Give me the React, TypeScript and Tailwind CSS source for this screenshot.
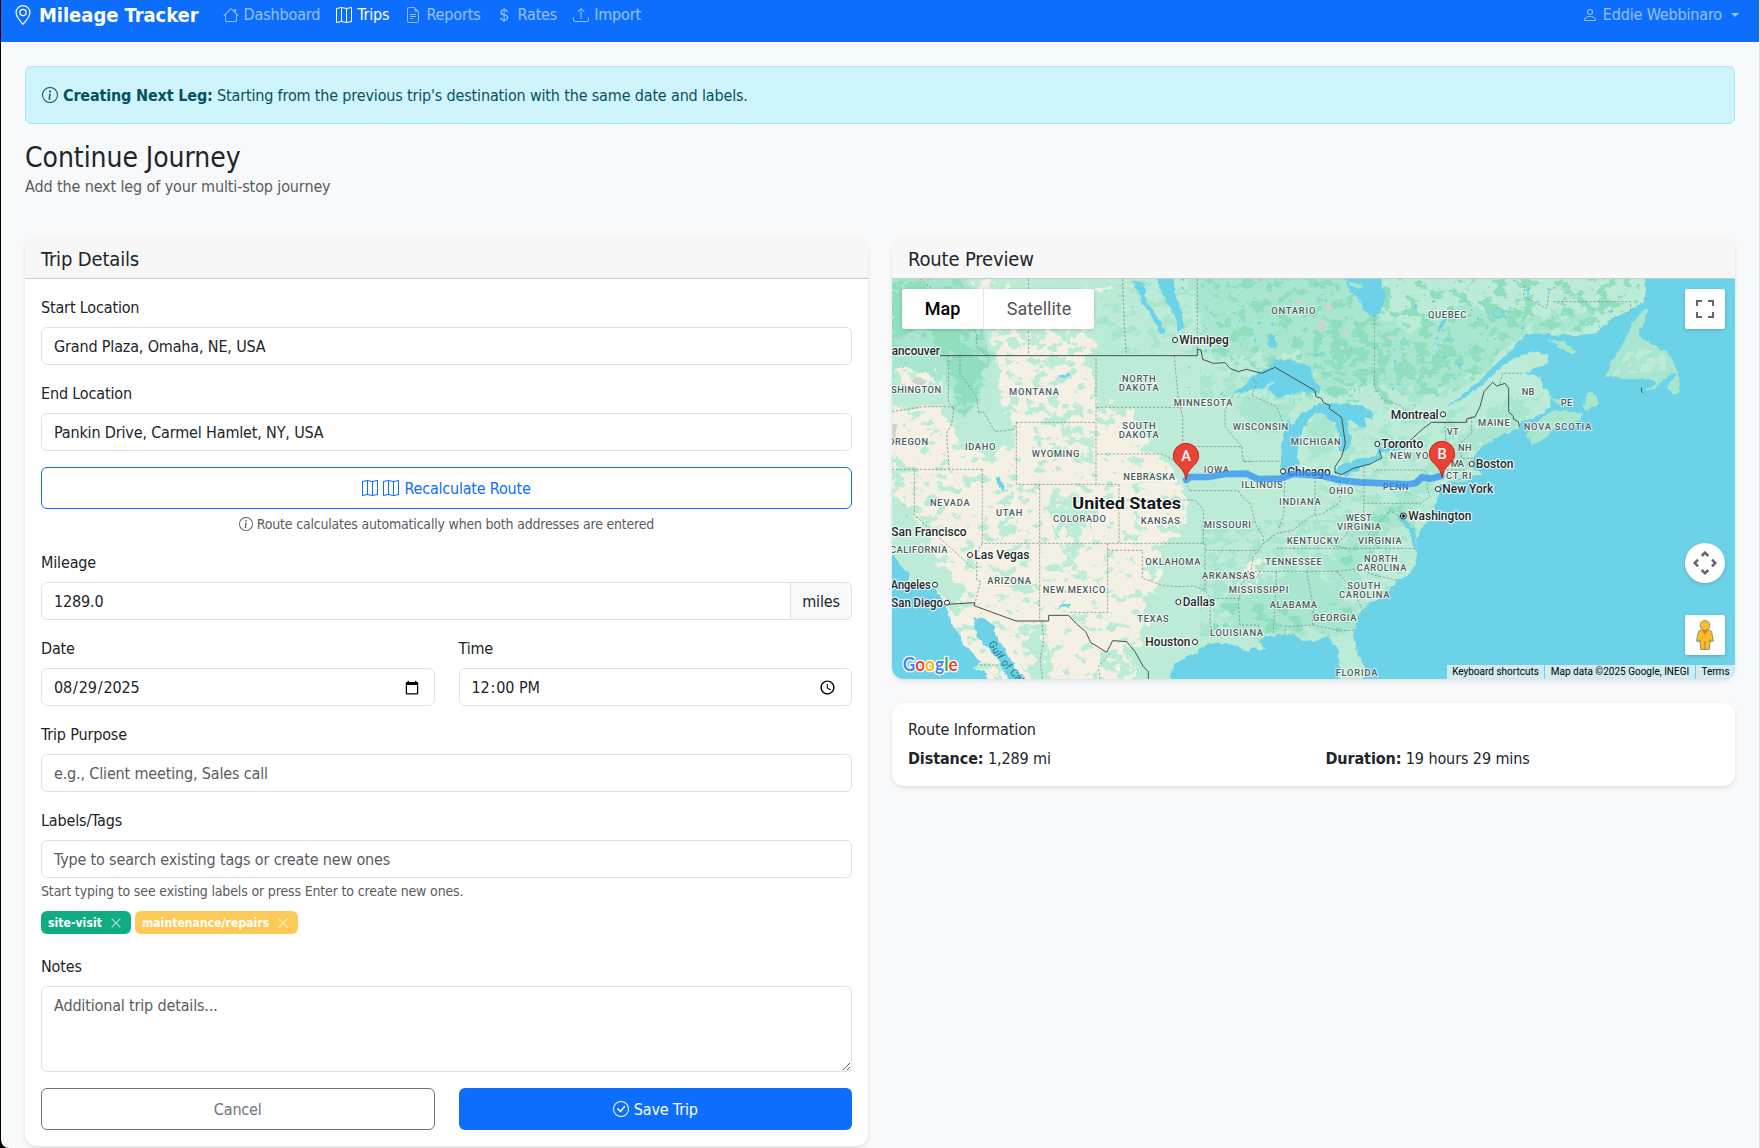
import type { ReactNode } from "react";
import {
  BsGeoAlt,
  BsHouse,
  BsMap,
  BsFileEarmarkText,
  BsCurrencyDollar,
  BsUpload,
  BsPerson,
  BsInfoCircle,
  BsCheckCircle,
} from "react-icons/bs";

const inputClass =
  "block w-full h-[38px] rounded-md border border-[#dee2e6] bg-white px-3 text-[#212529] placeholder:text-[#595c5f] placeholder:opacity-100 outline-none";
const pickerClass =
  "block w-full h-[38px] rounded-md border border-[#dee2e6] bg-white pl-[11px] pr-3 pt-px text-[#212529] outline-none";

function Field({ label, children }: { label: string; children: ReactNode }) {
  return (
    <div className="min-w-0">
      <label className="mb-[7px] block pt-px leading-6">{label}</label>
      {children}
    </div>
  );
}

function NavLink({ icon, text, active }: { icon: ReactNode; text: string; active?: boolean }) {
  return (
    <a className={active ? "flex items-center gap-[5px] px-2 text-white" : "flex items-center gap-[5px] px-2 text-white/55"}>
      {icon}
      <span>{text}</span>
    </a>
  );
}

function Badge({ text, className }: { text: string; className: string }) {
  return (
    <span className={"flex h-[23px] items-center rounded-md pl-[7px] pr-[10px] text-xs font-bold tracking-[0.08px] text-white " + className}>
      <span className="pt-px">{text}</span>
      <svg className="ml-[9px] h-[10px] w-[10px] opacity-60" viewBox="0 0 10 10" stroke="#fff" strokeWidth="1.1" fill="none">
        <path d="M.5.5l9 9M9.5.5l-9 9" />
      </svg>
    </span>
  );
}

type Label = [text: string, x: number, baseline: number, width: number];

const STATES: Label[] = [
  ["MONTANA", 387, 524, 150],
  ["NORTH", 726, 485, 101],
  ["DAKOTA", 716, 512, 120],
  ["SOUTH", 727, 627, 100],
  ["DAKOTA", 716, 654, 120],
  ["MINNESOTA", 881, 558, 176],
  ["WISCONSIN", 1058, 630, 166],
  ["SHINGTON", 33, 518, 150],
  ["OREGON", 24, 674, 120],
  ["IDAHO", 255, 689, 91],
  ["WYOMING", 455, 711, 143],
  ["ONTARIO", 1174, 282, 132],
  ["QUEBEC", 1644, 294, 115],
  ["MICHIGAN", 1232, 674, 150],
  ["NB", 1925, 524, 38],
  ["PE", 2042, 557, 35],
  ["MAINE", 1794, 617, 95],
  ["NOVA SCOTIA", 1931, 631, 203],
  ["VT", 1700, 646, 36],
  ["NH", 1734, 694, 41],
  ["NEW YO", 1530, 716, 115],
  ["NEBRASKA", 730, 780, 155],
  ["IOWA", 971, 758, 76],
  ["ILLINOIS", 1084, 803, 124],
  ["INDIANA", 1197, 855, 125],
  ["OHIO", 1347, 821, 73],
  ["PENN", 1508, 810, 78],
  ["MA", 1712, 741, 40],
  ["CT RI", 1698, 777, 76],
  ["NEVADA", 150, 857, 119],
  ["UTAH", 348, 888, 79],
  ["COLORADO", 519, 906, 159],
  ["KANSAS", 782, 913, 118],
  ["MISSOURI", 971, 923, 142],
  ["WEST", 1397, 903, 78],
  ["VIRGINIA", 1371, 930, 132],
  ["KENTUCKY", 1220, 972, 157],
  ["VIRGINIA", 1434, 972, 131],
  ["CALIFORNIA", 30, 1000, 172],
  ["OKLAHOMA", 796, 1034, 165],
  ["TENNESSEE", 1156, 1034, 169],
  ["NORTH", 1452, 1025, 101],
  ["CAROLINA", 1430, 1052, 149],
  ["ARIZONA", 322, 1092, 131],
  ["ARKANSAS", 966, 1076, 158],
  ["NEW MEXICO", 488, 1118, 188],
  ["MISSISSIPPI", 1046, 1119, 179],
  ["SOUTH", 1402, 1107, 99],
  ["CAROLINA", 1377, 1135, 151],
  ["ALABAMA", 1169, 1164, 142],
  ["GEORGIA", 1299, 1202, 130],
  ["TEXAS", 772, 1206, 94],
  ["LOUISIANA", 990, 1249, 159],
  ["FLORIDA", 1367, 1367, 125],
];

const CITIES: Label[] = [
  ["ancouver", 35, 404, 145],
  ["Winnipeg", 898, 373, 148],
  ["Montreal", 1532, 597, 144],
  ["Toronto", 1504, 685, 126],
  ["Chicago", 1222, 768, 130],
  ["Boston", 1787, 743, 113],
  ["New York", 1687, 819, 153],
  ["Washington", 1585, 900, 189],
  ["San Francisco", 34, 949, 226],
  ["Las Vegas", 283, 1017, 165],
  ["Angeles", 32, 1106, 120],
  ["San Diego", 34, 1160, 155],
  ["Dallas", 908, 1158, 97],
  ["Houston", 796, 1278, 135],
];

const CITY_DOTS: [number, number][] = [
  [885, 360], [1689, 583], [1492, 672], [1209, 754], [1775, 732], [1674, 807],
  [270, 1005], [165, 1094], [201, 1148], [895, 1146], [945, 1266],
];

function Pin({ x, y, letter }: { x: number; y: number; letter: string }) {
  return (
    <g transform={`translate(${x} ${y})`}>
      <path
        d="M0 0C-3-16-8-26-19-37-31-49-38-56-38-70a38 38 0 0 1 76 0C38-56 31-49 19-37 8-26 3-16 0 0Z"
        fill="#ea4335"
        stroke="#c5221f"
        strokeWidth="3"
      />
      <text x="0" y="-54" textAnchor="middle" fontSize="44" fontWeight="500" fill="#fff">
        {letter}
      </text>
    </g>
  );
}

const OCEAN =
  "M2295 160L2295 240 2250 270 2190 300 2150 340 2090 346 1940 340 1915 365 1900 390 1850 430 1790 490 1740 530 1700 560 1745 540 1800 500 1850 452 1890 420 1930 404 1970 395 2005 405 2005 430 1930 462 1980 470 1990 500 2008 520 2012 560 1975 590 1925 604 1912 625 1870 645 1830 665 1795 690 1780 710 1776 735 1790 755 1810 760 1795 768 1770 770 1715 782 1680 790 1676 820 1660 870 1640 910 1615 940 1607 960 1612 1015 1590 1065 1550 1080 1530 1110 1480 1145 1445 1170 1430 1200 1420 1240 1430 1290 1450 1330 1452 1400 2600 1400 2600 160Z";
const GULF =
  "M870 1400L875 1350 890 1330 915 1315 950 1300 965 1280 1000 1270 1050 1270 1080 1285 1105 1300 1120 1285 1155 1290 1135 1265 1155 1245 1200 1245 1240 1240 1270 1262 1300 1266 1345 1248 1365 1275 1375 1300 1378 1330 1382 1400Z";
const PACIFIC =
  "M20 1000L36 1005 85 1060 85 1080 130 1095 165 1110 190 1140 205 1175 215 1215 245 1250 250 1275 280 1300 300 1330 275 1343 300 1350 320 1360 332 1400 20 1400Z";

function RouteMap() {
  return (
    <svg
      className="block h-[400px] w-full"
      viewBox="36 177 2529 1200"
      preserveAspectRatio="none"
      fontFamily="Roboto, sans-serif"
    >
      <defs>
        <filter id="ragged" x="-5%" y="-5%" width="110%" height="110%" colorInterpolationFilters="sRGB">
          <feTurbulence type="fractalNoise" baseFrequency="0.05" numOctaves="3" seed="4" />
          <feDisplacementMap in="SourceGraphic" scale="17" xChannelSelector="R" yChannelSelector="G" />
        </filter>
        <filter id="torn" x="-10%" y="-10%" width="120%" height="120%" colorInterpolationFilters="sRGB">
          <feTurbulence type="fractalNoise" baseFrequency="0.025" numOctaves="4" seed="9" />
          <feDisplacementMap in="SourceGraphic" scale="90" xChannelSelector="R" yChannelSelector="G" />
        </filter>
        <filter id="sparse" x="0" y="0" width="100%" height="100%" colorInterpolationFilters="sRGB">
          <feTurbulence type="fractalNoise" baseFrequency="0.024 0.034" numOctaves="4" seed="21" />
          <feColorMatrix values="0 0 0 0 0  0 0 0 0 0  0 0 0 0 0  24 0 0 0 -14.8" result="m" />
          <feComposite in="SourceGraphic" in2="m" operator="in" />
        </filter>
        <filter id="speckle" x="0" y="0" width="100%" height="100%" colorInterpolationFilters="sRGB">
          <feTurbulence type="fractalNoise" baseFrequency="0.026 0.034" numOctaves="4" seed="12" />
          <feColorMatrix values="0 0 0 0 0  0 0 0 0 0  0 0 0 0 0  24 0 0 0 -13.6" result="m" />
          <feComposite in="SourceGraphic" in2="m" operator="in" />
        </filter>
        <filter id="dense" x="0" y="0" width="100%" height="100%" colorInterpolationFilters="sRGB">
          <feTurbulence type="fractalNoise" baseFrequency="0.028 0.034" numOctaves="4" seed="33" />
          <feColorMatrix values="0 0 0 0 0  0 0 0 0 0  0 0 0 0 0  24 0 0 0 -12" result="m" />
          <feComposite in="SourceGraphic" in2="m" operator="in" />
        </filter>
        <filter id="lakes" x="0" y="0" width="100%" height="100%" colorInterpolationFilters="sRGB">
          <feTurbulence type="fractalNoise" baseFrequency="0.06" numOctaves="2" seed="7" />
          <feColorMatrix values="0 0 0 0 0  0 0 0 0 0  0 0 0 0 0  30 0 0 0 -22" result="m" />
          <feComposite in="SourceGraphic" in2="m" operator="in" />
        </filter>
      </defs>

      <rect x="36" y="177" width="2529" height="1200" fill="#bcecd8" />

      {/* dry land */}
      <g fill="#f5f0e4" filter="url(#torn)">
        <path d="M330 300L360 300 440 360 520 320 640 350 640 400 620 420 650 480 660 560 760 575 800 690 870 730 930 850 910 900 860 960 850 1060 800 1130 780 1250 740 1300 800 1420 -60 1420 -60 1040 -60 560 190 560 240 680 330 720 400 650 370 560 350 430Z" />
        <path d="M290 185L350 200 440 210 560 280 640 300 600 330 520 290 400 260 320 260Z" />
        <path d="M610 200L720 205 650 225Z" />
        <path d="M40 440L170 450 180 500 60 500Z" />
        <path d="M1090 1080l40-70 18 6-28 110-26 22Z" />
      </g>
      <g fill="#bcecd8">
        <path filter="url(#sparse)" d="M36 177H960V1377H36Z" />
        <path filter="url(#speckle)" d="M280 180H700V480H340ZM420 470L640 560 640 740 480 700ZM36 740H200V1100H36Z" />
        <path filter="url(#dense)" d="M520 800L620 830 640 960 580 1020 540 980 500 880ZM350 850L430 790 410 930 350 970ZM320 1030L480 1100 480 1160 370 1090ZM410 1210L500 1220 520 1377 450 1377ZM660 1280L760 1300 790 1377 660 1377ZM480 560L600 620 640 700 560 640Z" />
        <path filter="url(#torn)" d="M20 800L90 860 130 960 210 1060 260 1110 230 1180 180 1130 80 1080 20 1010ZM36 700L70 760 36 800ZM540 820L580 830 620 900 560 950ZM560 990L580 980 580 1060 560 1050ZM240 560L300 570 330 660 260 690ZM430 1230L480 1230 510 1377 460 1377Z" />
      </g>

      {/* forest tones */}
      <g fill="#a8e6cf">
        <path filter="url(#torn)" d="M20 150H250L300 300 330 420 300 540 240 600 200 480 80 440 20 480Z" />
        <path filter="url(#torn)" d="M920 150H1400L1460 260 1600 340 1780 260 2010 300 2200 240 2100 330 1930 330 1880 400 1760 480 1640 540 1500 500 1330 520 1240 400 1100 420 1000 400 940 260Z" />
        <path filter="url(#torn)" d="M1060 540L1260 540 1200 640 1100 620ZM1290 560L1380 610 1350 700 1280 720ZM1450 900L1560 820 1680 720 1760 640 1860 560 1980 520 1900 620 1760 720 1650 800 1530 960 1400 1080 1330 1060ZM1030 1140L1300 1040 1420 1160 1420 1240 1100 1240Z" />
        <path filter="url(#dense)" d="M960 440H1300V540H960ZM960 900H1500V1250H960Z" />
        <path filter="url(#speckle)" d="M650 177H1000V400H650ZM1300 560H1900V1200H1300Z" />
      </g>
      <g fill="#8fdfbe">
        <path filter="url(#torn)" d="M36 190H110L190 260 250 380 320 420 300 500 240 550 220 430 150 340 60 320 36 420Z" />
        <path filter="url(#dense)" d="M36 177H240L300 300 330 420 300 540 240 600 215 480 190 400 110 340 36 440Z" />
        <path filter="url(#speckle)" d="M960 177H2280V330L1900 340 1800 470 1640 560 1300 540 1000 410Z" />
        <path filter="url(#dense)" d="M1300 330H1500L1520 480 1400 500 1300 440ZM1560 360L1760 380 1740 470 1570 480ZM1820 250L1960 260 1900 350 1830 360ZM2050 230L2230 250 2130 310Z" />
        <path filter="url(#speckle)" d="M1440 900L1600 800 1560 960 1360 1060ZM1000 1150H1420V1240H1000ZM60 830l20 30 4 40-20-20Z" />
      </g>
      <g fill="#cfd3cf">
        <path filter="url(#ragged)" d="M1335 250l26 12-10 16-18-12ZM1315 300l22-2-4 30-14 6ZM1382 330l20 4-6 14ZM92 480l30-8 22 14-30 8ZM1242 245l20-6 10 14-20 4ZM1522 346l24 2-8 12ZM38 610l12 4-4 40-10 0Z" />
      </g>
      <path fill="#6cd2e8" filter="url(#lakes)" d="M900 177H2280V330L1900 340 1700 520 1300 560 900 520Z" />

      {/* seas, gulfs and lakes */}
      <g fill="#6cd2e8" filter="url(#ragged)">
        <path d={OCEAN} />
        <path d={GULF} />
        <path d={PACIFIC} />
        <path d="M280 1190L320 1200 345 1215 345 1245 380 1300 410 1350 455 1400 395 1400 360 1330 320 1280 290 1250 285 1220Z" />
        <path d="M1390 160L1410 210 1440 240 1450 270 1475 288 1500 280 1518 230 1505 200 1505 160Z" />
        <path d="M1055 525L1100 490 1130 460 1170 440 1185 418 1240 420 1290 440 1300 480 1322 500 1318 522 1260 512 1225 525 1195 532 1160 510 1190 480 1150 505 1115 512Z" />
        <path d="M1222 600L1212 640 1205 690 1203 740 1220 772 1250 768 1256 735 1250 690 1262 650 1280 610 1310 578 1350 574 1350 562 1300 560 1265 580 1240 615Z" />
        <path d="M1300 556L1345 548 1400 552 1445 556 1475 575 1478 600 1452 594 1460 625 1436 622 1414 600 1400 604 1412 645 1408 678 1392 697 1376 690 1382 655 1364 612 1338 588 1300 572Z" />
        <path d="M1362 762L1380 735 1420 722 1470 708 1500 702 1504 715 1450 740 1395 768Z" />
        <path d="M1490 688L1530 672 1590 664 1592 685 1530 697 1490 702Z" />
        <path d="M820 160L880 160 885 220 902 270 915 315 893 335 890 300 870 260 850 225Z" />
        <path d="M755 185L790 190 800 245 832 285 855 335 840 342 820 300 790 255 776 215Z" />
        <path d="M345 770l14-4 14 38-10 8ZM1165 345l20 0 4 30-14 10-12-18ZM520 1164l50-14-4 12ZM535 470l32-12 4 6-34 14ZM1668 330l30-44 6 6-24 44ZM1725 425l28 8-14 10ZM1590 930l14 8 6 60-12-26ZM1560 870l14 30 30 30-6 12-40-40Z" />
      </g>
      <circle cx="1855" cy="279" r="15" fill="none" stroke="#6cd2e8" strokeWidth="4" />
      <g fill="#a8e6cf" filter="url(#ragged)">
        <path d="M2290 270L2258 310 2225 380 2195 420 2175 470 2250 475 2320 480 2330 490 2295 515 2320 510 2350 480 2375 460 2390 465 2360 500 2375 525 2395 520 2400 480 2385 440 2370 400 2330 380 2300 362 2272 352 2305 270Z" />
        <path d="M2002 360L2050 365 2090 395 2080 403 2050 390Z" />
        <path d="M1940 640L1955 675 1980 665 2010 640 2050 612 2105 600 2108 580 2050 570 2010 576 1980 600Z" />
        <path d="M2110 560L2130 510 2140 520 2155 548 2120 575ZM2010 530L2050 540 2080 545 2060 558 2030 552Z" />
        <path d="M1402 180l34 8 10 18-24-4Z" />
        <path d="M1700 786L1770 776 1750 790Z" />
      </g>
      <path fill="#bcecd8" filter="url(#dense)" d="M2250 380L2360 400 2370 450 2200 465ZM1960 400L2000 405 1930 440Z" />

      {/* state and province borders */}
      <g fill="none" stroke="#7d8f8a" strokeWidth="2.4" strokeDasharray="7 5">
        <path d="M446 177V407M728 177L732 300 739 407M952 388V177M120 177L160 210 250 280 290 340 290 380 320 407M205 407V545L222 570M240 407V460L290 530 296 580 310 575 345 635 400 628 410 607M36 575L130 560H222L215 610 200 640 207 748M36 748H307M409 607H648M409 607V793H717M648 415V792M650 562H905M883 407L895 540 908 590V700M650 702H845L880 720 905 730M717 793V970M717 840H945L970 870V970M307 748V970H970M103 748V885L285 1050M307 970L290 1000 290 1080 302 1085 285 1148M479 793V1203M683 970V1177H565M683 991H787V1075L850 1097 900 1100 940 1098 975 1110M975 970V1110L990 1135V1210L1000 1250M975 991H1135M930 812H1075M930 812L905 770M905 680H1085L1090 725 1115 725M1085 680L1035 620V570L1060 525M1075 812L1085 830 1110 850 1130 920 1150 950 1150 970 1120 1010 1110 1070 1085 1090 1075 1150 1080 1215H1135L1140 1240M1000 1135H1080M1090 724H1200M1214 775L1212 880 1195 930M1305 770V890M1150 970L1190 940 1240 930 1290 890 1330 880 1375 850M1305 775L1380 768M1190 985H1610M1100 1054H1370M1190 1054L1180 1240M1280 1054L1300 1160 1298 1215 1215 1220V1245M1298 1215L1380 1232 1425 1230M1370 1054L1420 1110 1445 1165M1370 1054L1440 1045 1480 1065 1550 1080M1452 740V850H1620L1650 830 1640 800 1650 770 1630 750H1480M1375 970L1400 940 1450 880 1452 850M1380 768V850M1330 970L1400 985M1500 985L1460 950 1530 870 1600 920M1116 527L1130 490 1120 478M1116 527L1190 560 1210 610M1483 285V500L1510 540 1560 555 1580 575M1695 607L1700 720M1775 590V640L1740 670 1745 715H1790M1700 750H1760M1700 720L1690 765M1860 490L1868 460H1925M1900 180L1935 200 1930 230 2000 265 2008 210 2030 200M2020 245H2252V275M485 1203L492 1260 480 1320 488 1377M690 1300L655 1340 660 1377M300 1335H370" />
      </g>

      {/* national borders */}
      <g fill="none" stroke="#454f4d" strokeWidth="3" strokeLinejoin="round">
        <path d="M180 407H952V388L963 390 968 418 1000 430 1035 428 1050 445 1075 455 1100 448 1145 460 1185 442 1305 512 1308 530 1325 535 1330 548 1350 556 1348 566 1385 592 1396 670 1385 710 1365 740 1365 757 1385 764 1420 745 1470 732 1505 714 1498 690M1588 664L1630 625 1655 607H1760V597L1785 590 1800 560 1812 515 1838 487 1850 498 1875 490 1886 505V575L1900 590 1900 597 1915 605 1918 620" />
        <path d="M200 1153L285 1148 282 1157 408 1203H506V1186H565L590 1212 617 1235 632 1267 680 1297 698 1262 740 1265 765 1295 790 1340 805 1355V1377" />
        <path d="M2285 503l-1 10 5 6" />
      </g>

      {/* names */}
      <g fill="#4b5a5c" stroke="#ffffff" strokeWidth="6" strokeOpacity=".75" strokeLinejoin="round" paintOrder="stroke" fontSize="28" fontWeight="500">
        {STATES.map(([t, x, y, w], i) => (
          <text key={i} x={x} y={y} textLength={w}>{t}</text>
        ))}
      </g>
      <g fill="#fff" stroke="#222" strokeWidth="3">
        {CITY_DOTS.map(([x, y], i) => (
          <circle key={i} cx={x} cy={y} r="7.5" />
        ))}
        <circle cx="1570" cy="888" r="9" />
        <circle cx="1570" cy="888" r="4" fill="#111" />
      </g>
      <g fill="#1f2a2c" stroke="#ffffff" strokeWidth="7" strokeOpacity=".8" strokeLinejoin="round" paintOrder="stroke" fontSize="36" fontWeight="500">
        {CITIES.map(([t, x, y, w]) => (
          <text key={t} x={x} y={y} textLength={w} lengthAdjust="spacingAndGlyphs">{t}</text>
        ))}
      </g>
      <text x="577" y="868" textLength="326" lengthAdjust="spacingAndGlyphs" fontSize="51" fontWeight="700" fill="#14191a" stroke="#fff" strokeWidth="8" strokeOpacity=".85" strokeLinejoin="round" paintOrder="stroke">
        United States
      </text>
      <path id="gulf" d="M325 1270C345 1310 375 1350 430 1400" fill="none" />
      <text fontSize="31" fill="#16798c" letterSpacing="1">
        <textPath href="#gulf">Gulf of Califor</textPath>
      </text>

      {/* route */}
      <path
        d="M919 780L930 771 985 771 1036 762 1100 761 1133 777 1200 776 1238 762 1326 767 1375 780 1440 787 1585 793 1608 789 1625 772 1650 776 1684 768"
        fill="none"
        stroke="#2f8ff5"
        strokeOpacity=".75"
        strokeWidth="20"
        strokeLinejoin="round"
        strokeLinecap="round"
      />
      <Pin x={918} y={778} letter="A" />
      <Pin x={1686} y={772} letter="B" />

      <text x="68" y="1352" textLength="165" lengthAdjust="spacingAndGlyphs" fontFamily="Lato, sans-serif" fontSize="56" fontWeight="700" stroke="#fff" strokeWidth="8" strokeLinejoin="round" paintOrder="stroke">
        <tspan fill="#4285f4">G</tspan>
        <tspan fill="#ea4335">o</tspan>
        <tspan fill="#fbbc05">o</tspan>
        <tspan fill="#4285f4">g</tspan>
        <tspan fill="#34a853">l</tspan>
        <tspan fill="#ea4335">e</tspan>
      </text>
    </svg>
  );
}

function MapPanel() {
  return (
    <div className="relative h-[400px] overflow-hidden rounded-b-xl font-['Roboto',sans-serif] tracking-normal [font-stretch:normal]">
      <RouteMap />
      <div className="absolute left-[10px] top-[10px] flex h-10 rounded-xs bg-white text-lg leading-10 shadow-[0_1px_4px_-1px_rgba(0,0,0,.3)]">
        <span className="w-[82px] border-r border-[#e6e6e6] text-center font-medium text-black">Map</span>
        <span className="w-[110px] text-center text-[#565656]">Satellite</span>
      </div>
      <div className="absolute right-[10px] top-[10px] grid h-10 w-10 place-items-center rounded-xs bg-white shadow-[0_1px_4px_-1px_rgba(0,0,0,.3)]">
        <svg className="h-[18px] w-[18px]" viewBox="0 0 18 18" fill="#666">
          <path d="M0 0v6h2V2h4V0H0Zm16 0h-4v2h4v4h2V0h-2Zm0 16h-4v2h6v-6h-2v4ZM2 12H0v6h6v-2H2v-4Z" />
        </svg>
      </div>
      <div className="absolute right-[10px] top-[264px] grid h-10 w-10 place-items-center rounded-full bg-white shadow-[0_1px_4px_-1px_rgba(0,0,0,.3)]">
        <svg className="h-6 w-6" viewBox="0 0 24 24" fill="none" stroke="#666" strokeWidth="2.5">
          <path d="M8.700 5L12 1.700 15.300 5M8.700 19L12 22.300 15.300 19M5 8.700L1.700 12 5 15.300M19 8.700L22.300 12 19 15.300" />
        </svg>
      </div>
      <div className="absolute right-[10px] top-[336px] grid h-10 w-10 place-items-center rounded-xs bg-white shadow-[0_1px_4px_-1px_rgba(0,0,0,.3)]">
        <svg className="-ml-px h-[30px] w-[18px]" viewBox="0 0 18 30" fill="#fbbc2a" stroke="#7c7763" strokeWidth=".8">
          <path d="M4.5 10h9l2 1.5 2 9.5-2.6.8-.9-2-.7 9.7H4.700l-.7-9.700-.9 2L.5 21l2-9.500Z" />
          <circle cx="9" cy="5.400" r="4.900" />
          <path d="M6 10.500h6l-3 4.500Z" fill="#e67a2e" stroke="none" />
          <path d="M9 21v8.500" />
        </svg>
      </div>
      <div className="absolute bottom-0 right-0 flex h-[14px] gap-px text-[10px] leading-[14px] text-black">
        <span className="w-[97px] bg-[#d0ebf2] text-center">Keyboard shortcuts</span>
        <span className="w-[150px] bg-[#d0ebf2] text-center">Map data ©2025 Google, INEGI</span>
        <span className="w-[39px] bg-[#d0ebf2] text-center">Terms</span>
      </div>
    </div>
  );
}

export default function App() {
  return (
    <div className="h-[1148px] overflow-hidden bg-black pl-px font-['DejaVu_Sans_Condensed','DejaVu_Sans',sans-serif] text-base tracking-[-0.16px] text-[#212529] [font-stretch:condensed]">
      <div className="h-full rounded-bl-lg border-r border-[#e3e5e7] bg-[#f8f9fb]">
        <nav className="flex h-[42px] items-start justify-between bg-[#0d6efd] pl-3 pr-5">
          <div className="flex h-[29px] items-center">
            <div className="mr-4 flex items-center gap-[6px] text-xl font-bold tracking-[-0.04px] text-white">
              <BsGeoAlt size={20} />
              <span>Mileage Tracker</span>
            </div>
            <NavLink icon={<BsHouse size={16} />} text="Dashboard" />
            <NavLink icon={<BsMap size={16} />} text="Trips" active />
            <NavLink icon={<BsFileEarmarkText size={16} />} text="Reports" />
            <NavLink icon={<BsCurrencyDollar size={16} />} text="Rates" />
            <NavLink icon={<BsUpload size={16} />} text="Import" />
          </div>
          <div className="flex h-[29px] items-center gap-[5px] text-white/55">
            <BsPerson size={16} />
            <span>Eddie Webbinaro</span>
            <span className="ml-1 border-x-4 border-t-4 border-x-transparent border-t-white/60" />
          </div>
        </nav>

        <main className="px-6 pt-6">
          <div className="mb-4 flex h-[58px] items-center gap-[5px] rounded-md border border-[#9eeaf9] bg-[#cff4fc] px-4 text-[#055160]">
            <BsInfoCircle size={16} />
            <p className="pt-px">
              <strong>Creating Next Leg:</strong> Starting from the previous trip's destination with the same date and labels.
            </p>
          </div>
          <h1 className="pt-px text-[28px] leading-[34px] tracking-[-0.05px]">Continue Journey</h1>
          <p className="leading-6 tracking-[-0.12px] text-[#595c5f]">Add the next leg of your multi-stop journey</p>

          <div className="mt-[39px] grid grid-cols-2 items-start gap-6">
            <section className="rounded-xl bg-white shadow-[0_2px_4px_rgba(0,0,0,.1)]">
              <h2 className="h-[41px] rounded-t-xl border-b border-[#c8c9ca] bg-[#f7f7f7] px-4 pt-[9px] text-xl leading-6">Trip Details</h2>
              <form className="flex flex-col gap-4 p-4">
                <Field label="Start Location">
                  <input className={inputClass} defaultValue="Grand Plaza, Omaha, NE, USA" />
                </Field>
                <Field label="End Location">
                  <input className={inputClass} defaultValue="Pankin Drive, Carmel Hamlet, NY, USA" />
                </Field>
                <div>
                  <button type="button" className="flex h-[42px] w-full items-center justify-center gap-[5px] rounded-md border border-[#0d6efd] tracking-[-0.2px] text-[#0d6efd]">
                    <BsMap size={16} />
                    <BsMap size={16} />
                    <span className="pt-px">Recalculate Route</span>
                  </button>
                  <p className="mt-1 flex h-[21px] items-center justify-center gap-1 text-sm tracking-[-0.2px] text-[#595c5f]">
                    <BsInfoCircle size={14} />
                    <span>Route calculates automatically when both addresses are entered</span>
                  </p>
                </div>
                <Field label="Mileage">
                  <div className="flex">
                    <input className="h-[38px] min-w-0 flex-1 rounded-l-md border border-[#dee2e6] bg-white px-3 outline-none" defaultValue="1289.0" />
                    <span className="-ml-px flex h-[38px] w-[62px] items-center justify-center rounded-r-md border border-[#dee2e6] bg-[#f8f9fa] pt-px">miles</span>
                  </div>
                </Field>
                <div className="grid grid-cols-2 gap-6">
                  <Field label="Date">
                    <input type="date" className={pickerClass} defaultValue="2025-08-29" />
                  </Field>
                  <Field label="Time">
                    <input type="time" className={pickerClass} defaultValue="12:00" />
                  </Field>
                </div>
                <Field label="Trip Purpose">
                  <input className={inputClass} placeholder="e.g., Client meeting, Sales call" />
                </Field>
                <div>
                  <Field label="Labels/Tags">
                    <input className={inputClass} placeholder="Type to search existing tags or create new ones" />
                  </Field>
                  <p className="mt-[3px] text-sm leading-[21px] tracking-[-0.15px] text-[#595c5f]">Start typing to see existing labels or press Enter to create new ones.</p>
                  <div className="mb-1 mt-[9px] flex gap-1">
                    <Badge text="site-visit" className="bg-[#10ac84]" />
                    <Badge text="maintenance/repairs" className="bg-[#feca57]" />
                  </div>
                </div>
                <Field label="Notes">
                  <textarea
                    className="block h-[86px] w-full rounded-md border border-[#dee2e6] px-3 pt-[7px] leading-6 outline-none placeholder:text-[#595c5f] placeholder:opacity-100"
                    placeholder="Additional trip details..."
                  />
                </Field>
                <div className="grid grid-cols-2 gap-6">
                  <button type="button" className="h-[42px] rounded-md border border-[#6c757d] pt-px text-[#6c757d]">Cancel</button>
                  <button type="button" className="flex h-[42px] items-center justify-center gap-[5px] rounded-md bg-[#0d6efd] text-white">
                    <BsCheckCircle size={16} />
                    <span className="pt-px">Save Trip</span>
                  </button>
                </div>
              </form>
            </section>

            <div className="flex flex-col gap-6">
              <section className="rounded-xl bg-white shadow-[0_2px_4px_rgba(0,0,0,.1)]">
                <h2 className="h-[41px] rounded-t-xl border-b border-[#c8c9ca] bg-[#f7f7f7] px-4 pt-[9px] text-xl leading-6">Route Preview</h2>
                <MapPanel />
              </section>
              <section className="rounded-xl bg-white px-4 pb-[15px] pt-[17px] shadow-[0_2px_4px_rgba(0,0,0,.1)]">
                <h3 className="mb-2 leading-[19px] tracking-[-0.1px]">Route Information</h3>
                <div className="grid grid-cols-2 gap-6 leading-6 tracking-[-0.1px]">
                  <p><strong>Distance:</strong> 1,289 mi</p>
                  <p><strong>Duration:</strong> 19 hours 29 mins</p>
                </div>
              </section>
            </div>
          </div>
        </main>
      </div>
    </div>
  );
}
